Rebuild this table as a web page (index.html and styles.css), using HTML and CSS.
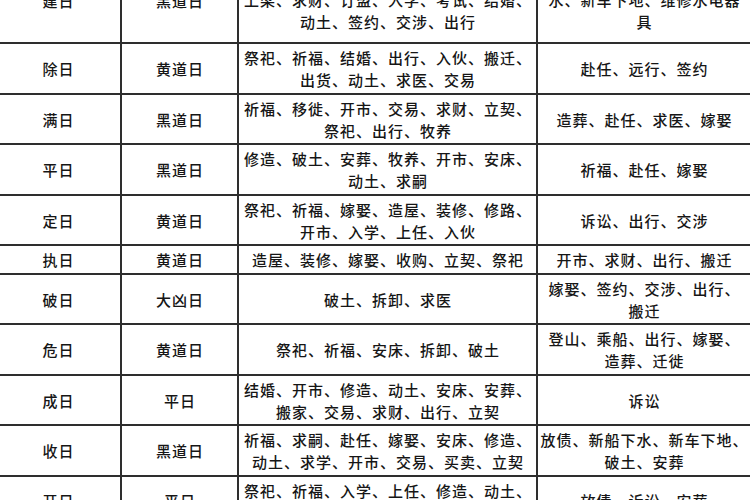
FILE: index.html
```html
<!DOCTYPE html>
<html lang="zh-CN">
<head>
<meta charset="utf-8">
<title>建除十二神</title>
<link rel="stylesheet" href="styles.css">
</head>
<body>
<div class="sheet">
  <div class="grid">
    <div class="cell r0">建日</div>
    <div class="cell r0">黑道日</div>
    <div class="cell r0 bottom">上梁、求财、订盟、入学、考试、结婚、<br>动土、签约、交涉、出行</div>
    <div class="cell r0 bottom">水、新车下地、维修水电器<br>具</div>

    <div class="cell">除日</div>
    <div class="cell">黄道日</div>
    <div class="cell">祭祀、祈福、结婚、出行、入伙、搬迁、<br>出货、动土、求医、交易</div>
    <div class="cell">赴任、远行、签约</div>

    <div class="cell">满日</div>
    <div class="cell">黑道日</div>
    <div class="cell">祈福、移徙、开市、交易、求财、立契、<br>祭祀、出行、牧养</div>
    <div class="cell">造葬、赴任、求医、嫁娶</div>

    <div class="cell">平日</div>
    <div class="cell">黑道日</div>
    <div class="cell">修造、破土、安葬、牧养、开市、安床、<br>动土、求嗣</div>
    <div class="cell">祈福、赴任、嫁娶</div>

    <div class="cell">定日</div>
    <div class="cell">黄道日</div>
    <div class="cell">祭祀、祈福、嫁娶、造屋、装修、修路、<br>开市、入学、上任、入伙</div>
    <div class="cell">诉讼、出行、交涉</div>

    <div class="cell">执日</div>
    <div class="cell">黄道日</div>
    <div class="cell">造屋、装修、嫁娶、收购、立契、祭祀</div>
    <div class="cell">开市、求财、出行、搬迁</div>

    <div class="cell">破日</div>
    <div class="cell">大凶日</div>
    <div class="cell">破土、拆卸、求医</div>
    <div class="cell">嫁娶、签约、交涉、出行、<br>搬迁</div>

    <div class="cell">危日</div>
    <div class="cell">黄道日</div>
    <div class="cell">祭祀、祈福、安床、拆卸、破土</div>
    <div class="cell">登山、乘船、出行、嫁娶、<br>造葬、迁徙</div>

    <div class="cell">成日</div>
    <div class="cell">平日</div>
    <div class="cell">结婚、开市、修造、动土、安床、安葬、<br>搬家、交易、求财、出行、立契</div>
    <div class="cell">诉讼</div>

    <div class="cell">收日</div>
    <div class="cell">黑道日</div>
    <div class="cell">祈福、求嗣、赴任、嫁娶、安床、修造、<br>动土、求学、开市、交易、买卖、立契</div>
    <div class="cell">放债、新船下水、新车下地、<br>破土、安葬</div>

    <div class="cell last">开日</div>
    <div class="cell last">平日</div>
    <div class="cell last top">祭祀、祈福、入学、上任、修造、动土、</div>
    <div class="cell last">放债、诉讼、安葬</div>
  </div>
</div>
</body>
</html>
```
FILE: styles.css
```css
html, body {
  margin: 0;
  padding: 0;
  background: #ffffff;
}

body {
  width: 750px;
  height: 500px;
  overflow: hidden;
}

.sheet {
  width: 750px;
  height: 500px;
  overflow: hidden;
}

.grid {
  display: grid;
  grid-template-columns: 124px 115px 297px 212px;
  gap: 2px;
  background: #2e2e2e;
  width: max-content;
  margin: -42px 0 0 -4px;
}

.cell {
  background: #ffffff;
  display: flex;
  align-items: center;
  justify-content: center;
  text-align: center;
  white-space: nowrap;
  padding: 3px 1px 1.5px 2px;
  font-family: "Noto Sans CJK SC", "Noto Sans", sans-serif;
  font-size: 15px;
  font-weight: 500;
  letter-spacing: 1px;
  line-height: 22px;
  color: #161616;
}

.r0 {
  height: 84px;
  box-sizing: border-box;
}

.bottom {
  align-items: flex-end;
  padding-bottom: 9px;
}

.last {
  height: 48px;
  box-sizing: border-box;
}

.top {
  align-items: flex-start;
}
```
